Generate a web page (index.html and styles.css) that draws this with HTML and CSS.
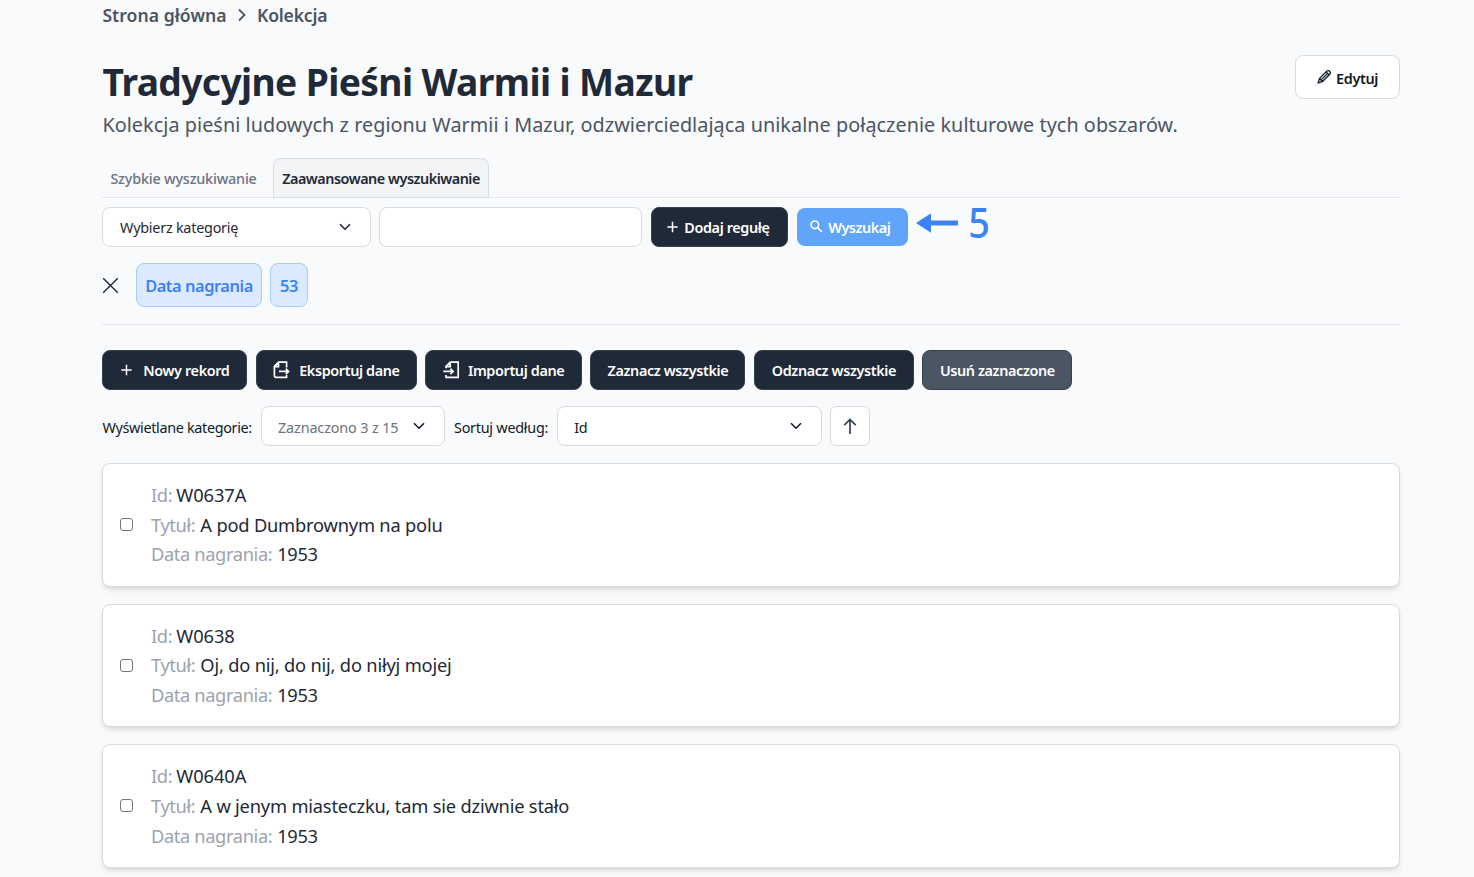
FILE: index.html
```html
<!DOCTYPE html>
<html lang="pl">
<head>
<meta charset="utf-8">
<title>Tradycyjne Pieśni Warmii i Mazur</title>
<link rel="stylesheet" href="styles.css">
</head>
<body>
<main class="page">
  <nav class="crumbs">
    <span class="crumb-home">Strona główna</span>
    <svg class="crumb-sep" width="8" height="14" viewBox="0 0 8 14"><path d="M1 1.5 6.5 7 1 12.5"/></svg>
    <span class="crumb-here">Kolekcja</span>
  </nav>

  <header class="head">
    <div class="head-text">
      <h1 class="title">Tradycyjne Pieśni Warmii i Mazur</h1>
      <p class="subtitle">Kolekcja pieśni ludowych z regionu Warmii i Mazur, odzwierciedlająca unikalne połączenie kulturowe tych obszarów.</p>
    </div>
    <button class="btn-edit">
      <svg width="15" height="15" viewBox="0 0 16 16"><path d="M1.3 14.7 2.6 10.2 10.6 2.2a2.3 2.3 0 0 1 3.2 3.2L5.8 13.4Z M2.6 10.2 5.8 13.4 M4.4 11.6 11.6 4.4 M9.7 3.1 12.9 6.3"/></svg>
      <span>Edytuj</span>
    </button>
  </header>

  <div class="tabs">
    <button class="tab">Szybkie wyszukiwanie</button>
    <button class="tab tab-active">Zaawansowane wyszukiwanie</button>
  </div>

  <div class="search-row">
    <div class="select select-category"><span>Wybierz kategorię</span><svg class="chevron" width="12" height="8" viewBox="0 0 12 8"><path d="M1 1.2 6 6.2 11 1.2"/></svg></div>
    <input class="query" type="text">
    <button class="btn btn-rule">
      <svg width="11" height="12" viewBox="0 0 11 12"><path d="M5.5.8v10.4M.3 6h10.4"/></svg>
      <span>Dodaj regułę</span>
    </button>
    <button class="btn-search">
      <svg width="13" height="13" viewBox="0 0 13 13"><circle cx="4.8" cy="4.8" r="3.8"/><path d="M7.6 7.6 12 12"/></svg>
      <span>Wyszukaj</span>
    </button>
    <div class="callout">
      <svg width="42" height="20" viewBox="0 0 42 20"><path d="M0 10 15 .3V7.6H42v4.8H15v7.3Z"/></svg>
      <span class="callout-number">5</span>
    </div>
  </div>

  <div class="rules">
    <svg class="remove" width="17" height="17" viewBox="0 0 17 17"><path d="M1.2 1.2 15.8 15.8M15.8 1.2 1.2 15.8"/></svg>
    <span class="chip chip-field">Data nagrania</span>
    <span class="chip chip-value">53</span>
  </div>

  <div class="actions">
    <button class="btn btn-new">
      <svg width="11" height="12" viewBox="0 0 11 12"><path d="M5.5.8v10.4M.3 6h10.4"/></svg>
      <span>Nowy rekord</span>
    </button>
    <button class="btn btn-export">
      <svg class="icon-file" width="17" height="18" viewBox="0 0 17 18"><path d="M13.6 6.4V1.2H5.6L1.4 5.4V15q0 1.3 1.3 1.3H13.6V14 M1.5 5.6H5.5V1.5 M6 10.4H15.4 M12.8 7.7 15.5 10.4 12.8 13.1"/></svg>
      <span>Eksportuj dane</span>
    </button>
    <button class="btn btn-import">
      <svg class="icon-file" width="17" height="18" viewBox="0 0 17 18"><path d="M3 7.2V5.4L7.2 1.2H15.2V16.3H3V14 M3.3 5.6H7.2V1.5 M.3 10.4H10 M7.4 7.7 10.1 10.4 7.4 13.1"/></svg>
      <span>Importuj dane</span>
    </button>
    <button class="btn btn-all"><span>Zaznacz wszystkie</span></button>
    <button class="btn btn-none"><span>Odznacz wszystkie</span></button>
    <button class="btn btn-delete"><span>Usuń zaznaczone</span></button>
  </div>

  <div class="filters">
    <span class="label label-show">Wyświetlane kategorie:</span>
    <div class="select select-shown"><span>Zaznaczono 3 z 15</span><svg class="chevron" width="12" height="8" viewBox="0 0 12 8"><path d="M1 1.2 6 6.2 11 1.2"/></svg></div>
    <span class="label label-sort">Sortuj według:</span>
    <div class="select select-sort"><span>Id</span><svg class="chevron" width="12" height="8" viewBox="0 0 12 8"><path d="M1 1.2 6 6.2 11 1.2"/></svg></div>
    <button class="btn-order"><svg width="14" height="17" viewBox="0 0 14 17"><path d="M7 16V1.5M1.2 7.2 7 1.4 12.8 7.2"/></svg></button>
  </div>

  <section class="records">
    <article class="record">
      <span class="check"></span>
      <dl class="fields">
        <div><dt>Id:</dt> <dd class="code">W0637A</dd></div>
        <div><dt>Tytuł:</dt> <dd>A pod Dumbrownym na polu</dd></div>
        <div><dt>Data nagrania:</dt> <dd class="year">1953</dd></div>
      </dl>
    </article>
    <article class="record">
      <span class="check"></span>
      <dl class="fields">
        <div><dt>Id:</dt> <dd class="code">W0638</dd></div>
        <div><dt>Tytuł:</dt> <dd>Oj, do nij, do nij, do niłyj mojej</dd></div>
        <div><dt>Data nagrania:</dt> <dd class="year">1953</dd></div>
      </dl>
    </article>
    <article class="record">
      <span class="check"></span>
      <dl class="fields">
        <div><dt>Id:</dt> <dd class="code">W0640A</dd></div>
        <div><dt>Tytuł:</dt> <dd>A w jenym miasteczku, tam sie dziwnie stało</dd></div>
        <div><dt>Data nagrania:</dt> <dd class="year">1953</dd></div>
      </dl>
    </article>
  </section>
</main>
</body>
</html>
```
FILE: styles.css
```css
* { box-sizing: border-box; }
html, body { margin: 0; height: 877px; overflow: hidden; }
body {
  background: #f9fafb;
  color: #1f2937;
  font-family: "Noto Sans", "Open Sans", sans-serif;
  font-size: 15px;
}
button, input { font: inherit; color: inherit; margin: 0; }
svg { fill: none; stroke: currentColor; stroke-width: 1.5; flex: none; display: block; }
span, dt, dd { white-space: nowrap; }

.page { width: 1297.4px; margin-left: 102.4px; display: flex; flex-direction: column; }

.crumbs { display: flex; align-items: center; height: 32px; padding-bottom: 2px; gap: 11px; font-size: 17.6px; font-weight: 600; letter-spacing: .04px; color: #4b5563; }
.crumb-home { width: 124.6px; }
.crumb-here { letter-spacing: -.2px; }
.crumb-sep { stroke-width: 1.8; }

.head { display: flex; justify-content: space-between; height: 126px; padding-top: 23px; }
.title { margin: 0; height: 54px; line-height: 53px; font-size: 37.2px; font-weight: 700; letter-spacing: -.61px; white-space: nowrap; }
.subtitle { margin: 0; margin-top: 1px; line-height: 30px; font-size: 19.8px; letter-spacing: .055px; color: #4b5563; white-space: nowrap; }
.btn-edit {
  display: flex; align-items: center; justify-content: center; gap: 4px;
  width: 104.5px; height: 44px; padding: 2px 0 0; background: #fff;
  border: 1px solid #d8dbe0; border-radius: 8px; font-size: 14.4px; font-weight: 600; letter-spacing: -.35px; color: #111827;
}
.btn-edit svg { margin-top: -3px; stroke-width: 1.4; }

.tabs { display: flex; height: 40px; border-bottom: 1px solid #e5e7eb; }
.tab { border: 1px solid transparent; background: none; width: 170.8px; height: 40px; padding: 0 0 0 7px; text-align: left; font-size: 14.4px; font-weight: 500; letter-spacing: -.2px; white-space: nowrap; color: #6b7280; }
.tab-active { width: 216px; padding-top: 1px; padding-left: 8px; background: #f3f4f6; border-color: #d8dbe0; border-radius: 8px 8px 0 0; font-weight: 600; letter-spacing: -.48px; color: #1f2937; }

.search-row { display: flex; align-items: center; height: 40px; margin-top: 9px; }
.select {
  display: flex; align-items: center; justify-content: space-between;
  height: 40px; padding: 1px 19px 0 16.6px; background: #fff;
  border: 1px solid #d8dbe0; border-radius: 8px; font-size: 14.4px; letter-spacing: -.24px;
}
.chevron { margin-top: -2px; stroke-width: 1.6; }
.select-category { width: 268.6px; }
.query { width: 263px; height: 40px; margin-left: 8.5px; background: #fff; border: 1px solid #d8dbe0; border-radius: 8px; }
.btn {
  display: flex; align-items: center; justify-content: center; flex: none;
  height: 40px; padding: 1px 0 0; border: 1px solid #374151; border-radius: 8px;
  background: #1f2937; color: #fff; font-size: 14.4px; font-weight: 600; letter-spacing: -.37px;
}
.btn-rule { width: 137.5px; margin-left: 8.2px; padding-right: 2px; gap: 6px; }
.btn svg { margin-top: -2px; }
.btn-search {
  display: flex; align-items: center; justify-content: center; gap: 5px;
  width: 111px; height: 38px; margin-left: 8.6px; padding: 1px 4px 0 0; border: 0; border-radius: 8px;
  background: #60a5fa; color: #fff; font-size: 14.4px; font-weight: 600; letter-spacing: -.45px;
}
.btn-search svg { margin-top: -2px; stroke-width: 1.6; }
.callout { display: flex; align-items: center; height: 40px; margin-left: 8px; gap: 9px; margin-top: -8px; color: #3b82f6; font-size: 42px; font-weight: 500; line-height: 40px; }
.callout svg { fill: currentColor; stroke: none; }
.callout-number { margin-top: -3px; transform: scaleX(.9); }

.rules { display: flex; align-items: center; height: 78px; padding-bottom: 1px; border-bottom: 1px solid #e5e7eb; }
.remove { stroke-width: 1.4; }
.chip {
  display: flex; align-items: center; justify-content: center; height: 44px; padding-top: 1px;
  background: #dbeafe; border: 1px solid #a3cdfd; border-radius: 8px;
  color: #3b82f6; font-size: 16.4px; font-weight: 600; letter-spacing: -.45px;
}
.chip-field { width: 126px; margin-left: 16.6px; }
.chip-value { width: 38px; margin-left: 8px; }

.actions { display: flex; gap: 8.5px; margin-top: 25px; }
.btn-new { width: 145px; gap: 11px; padding-left: 1px; }
.btn-export { width: 161px; gap: 9px; }
.btn-import { width: 156.5px; gap: 8px; }
.btn-all { width: 155px; }
.btn-none { width: 160px; }
.btn-delete { width: 150px; background: #4b5563; border-color: #374151; }
.icon-file { stroke-width: 1.7; }

.filters { display: flex; align-items: center; height: 40px; margin-top: 16px; color: #111827; font-size: 14.4px; }
.label { padding-top: 2px; letter-spacing: -.25px; }
.label-show { width: 158.6px; letter-spacing: -.33px; }
.label-sort { width: 102.6px; margin-left: 9px; }
.select-shown { width: 184px; padding-left: 16px; letter-spacing: -.13px; }
.filters .select { padding-top: 2px; }
.select-shown span { color: #6b7280; }
.select-sort { width: 265px; }
.btn-order { display: flex; align-items: center; justify-content: center; width: 40px; height: 40px; margin-left: 8.4px; padding: 0; background: #fff; border: 1px solid #d8dbe0; border-radius: 6px; color: #374151; }
.btn-order svg { stroke-width: 1.7; }

.records { display: flex; flex-direction: column; gap: 17px; margin-top: 17px; }
.record {
  display: flex; align-items: center; flex: none; height: 123.7px; padding: 0 17px 1px;
  background: #fff; border: 1px solid #d8dbe0; border-radius: 8px;
  box-shadow: 0 4px 6px -1px rgba(0,0,0,.1), 0 2px 4px -2px rgba(0,0,0,.1);
}
.check { width: 13px; height: 13px; border: 1px solid #767676; border-radius: 3px; background: #fff; }
.fields { margin: 0 0 0 17.6px; font-size: 18.3px; letter-spacing: -.2px; }
.fields div { height: 29.6px; line-height: 29.6px; display: flex; gap: 5px; }
dt { color: #9ca3af; letter-spacing: -.38px; }
dd { margin: 0; }
.code { margin-left: -1px; letter-spacing: -.05px; }
.year { letter-spacing: -.4px; }
```
